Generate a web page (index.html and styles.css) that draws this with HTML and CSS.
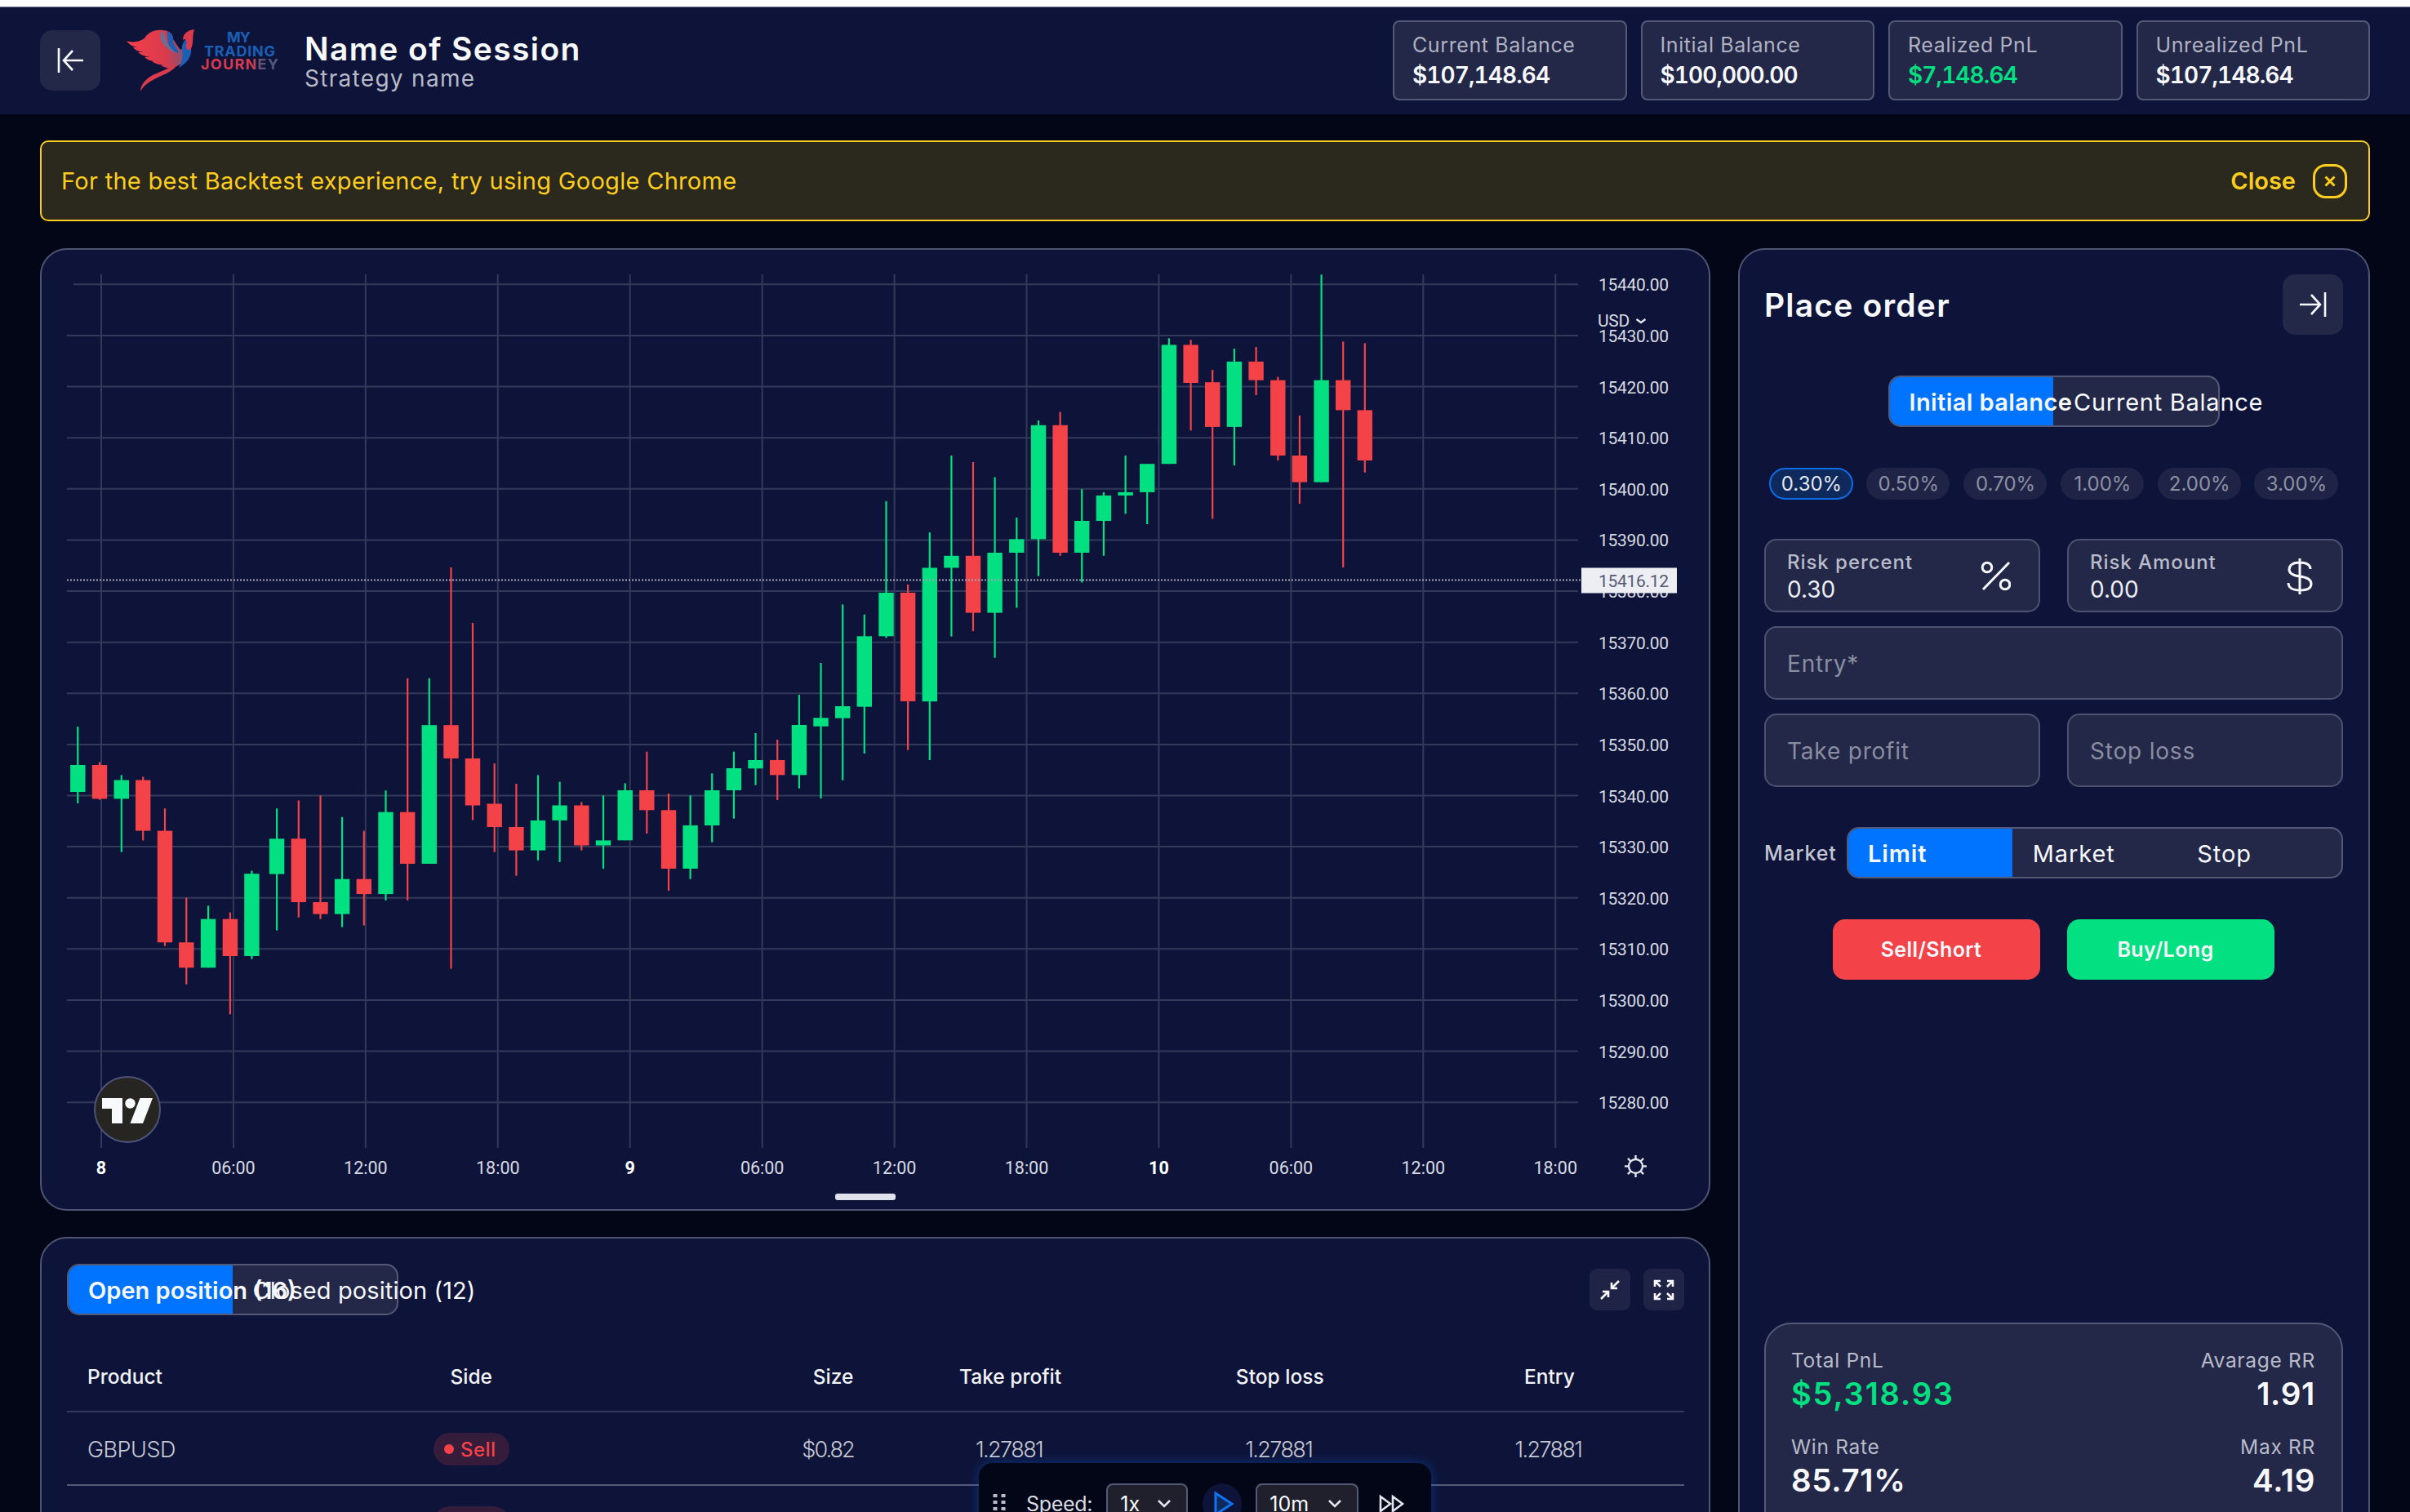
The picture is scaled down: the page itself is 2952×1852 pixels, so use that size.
FILE: index.html
```html
<!DOCTYPE html>
<html lang="en">
<head>
    <meta charset="UTF-8">
    <meta name="viewport" content="width=device-width, initial-scale=1.0">
    <title>My Trading Journey - Backtest</title>
    <link rel="stylesheet" href="styles.css">
</head>
<body>

    <!-- Header -->
    <header class="header">
        <button class="icon-btn">
            <svg width="36" height="36" viewBox="0 0 36 36"><path d="M4 3v30M34 18H11M21 6L10 18l11 12"/></svg>
        </button>
        <svg class="logo" width="188" height="80" viewBox="154 33 188 80">
            <defs>
                <linearGradient id="wing" x1="0" y1="0" x2="1" y2="0">
                    <stop offset="0" stop-color="#f4404a"/>
                    <stop offset="0.6" stop-color="#d93a4c"/>
                    <stop offset="1" stop-color="#5b5f86"/>
                </linearGradient>
                <linearGradient id="name" x1="0" y1="0" x2="1" y2="0">
                    <stop offset="0.65" stop-color="#d93a4c"/>
                    <stop offset="0.8" stop-color="#53577c"/>
                </linearGradient>
            </defs>
            <path fill="url(#wing)" d="M155 49c8 3 16 1 22-3 4-7 12-11 22-10 8 0 13 4 13 11l8 12c5 2 9-4 11-9 2-6 4-10 3-14 4 10 0 25-4 32-4 8-12 12-18 14-5 1-11 0-15-3l4-1c-6 1-11-1-15-4h5c-6 0-11-2-14-5h6c-6-1-11-3-14-6h6c-6-1-10-3-12-6h5c-6-1-10-4-13-8z"/>
            <path fill="#6b6f92" d="M198 36c5 6 4 12 8 18l10 10c-8-3-16-9-19-16-1-4 0-8 1-12z"/>
            <path fill="#1d5fb4" d="M204 37c7 2 9 8 8 13 2 7 6 9 7 14-6-1-10-5-13-12-1-5-1-11-2-15zM228 46c4 4 7 9 6 17-1 9-8 15-15 19 5-8 5-15 4-21-1-6 2-11 5-15z"/>
            <path fill="#d93a4c" d="M238 35c-8 1-14 5-14 13 3-3 6 1 4 6-1 4 2 7 5 6 5-7 2-16 5-25z"/>
            <path fill="#d93a4c" d="M216 79c-3 6-12 10-21 14-10 5-18 9-23 18 0-8 6-15 15-20 11-5 21-8 24-13z"/>
            <text class="logo-text blue" x="278" y="51" textLength="29">MY</text>
            <text class="logo-text blue" x="250" y="68" textLength="87">TRADING</text>
            <text class="logo-text" fill="url(#name)" x="246" y="84" textLength="95">JOURNEY</text>
        </svg>
        <div class="session">
            <h1>Name of Session</h1>
            <p>Strategy name</p>
        </div>
        <div class="balances">
            <div class="balance"><span>Current Balance</span><strong>$107,148.64</strong></div>
            <div class="balance"><span>Initial Balance</span><strong>$100,000.00</strong></div>
            <div class="balance"><span>Realized PnL</span><strong class="green">$7,148.64</strong></div>
            <div class="balance"><span>Unrealized PnL</span><strong>$107,148.64</strong></div>
        </div>
    </header>

    <main class="page">
        <!-- Browser notice -->
        <div class="notice">
            <p>For the best Backtest experience, try using Google Chrome</p>
            <button class="notice-close">
                Close
                <svg width="42" height="42" viewBox="0 0 42 42"><rect x="1.5" y="1.5" width="39" height="39" rx="14"/><path d="M15.500 15.500l11 11M26.500 15.500l-11 11"/></svg>
            </button>
        </div>

        <div class="columns">
            <div class="left">
                <!-- Chart -->
                <section class="panel chart-panel">
                    <svg id="chart" width="2041" height="1175" viewBox="51 306 2041 1175"></svg>
                </section>

                <!-- Positions -->
                <section class="panel positions">
                    <div class="positions-top">
                        <div class="tabs">
                            <div class="tab active">Open position (16)</div>
                            <div class="tab closed">Closed position (12)</div>
                        </div>
                        <div class="tools">
                            <button class="tool-btn">
                                <svg width="26" height="26" viewBox="0 0 26 26"><path d="M24 2l-8 8M15 4v7h7M2 24l8-8M4 15h7v7"/></svg>
                            </button>
                            <button class="tool-btn">
                                <svg width="26" height="26" viewBox="0 0 26 26"><path d="M2 9V2h7M3 3l6 6M17 2h7v7M23 3l-6 6M2 17v7h7M3 23l6-6M24 17v7h-7M23 23l-6-6"/></svg>
                            </button>
                        </div>
                    </div>
                    <div class="table">
                        <div class="row head">
                            <span class="start">Product</span><span>Side</span><span class="end">Size</span>
                            <span>Take profit</span><span>Stop loss</span><span>Entry</span>
                        </div>
                        <div class="row">
                            <span class="start">GBPUSD</span><span><b class="side">Sell</b></span><span class="end size">$0.82</span>
                            <span class="price">1.27881</span><span class="price">1.27881</span><span class="price">1.27881</span>
                        </div>
                        <div class="row">
                            <span class="start">GBPUSD</span><span><b class="side">Sell</b></span><span class="end size">$0.82</span>
                            <span class="price">1.27881</span><span class="price">1.27881</span><span class="price">1.27881</span>
                        </div>
                    </div>
                </section>
            </div>

            <!-- Place order -->
            <aside class="panel order">
                <div class="order-top">
                    <h2>Place order</h2>
                    <button class="icon-btn">
                        <svg width="36" height="36" viewBox="0 0 36 36"><path d="M33 3v30M2 18h23M16 6l11 12-11 12"/></svg>
                    </button>
                </div>
                <div class="tabs balance-tabs">
                    <div class="tab active">Initial balance</div>
                    <div class="tab">Current Balance</div>
                </div>
                <div class="chips">
                    <span class="chip active">0.30%</span>
                    <span class="chip">0.50%</span>
                    <span class="chip">0.70%</span>
                    <span class="chip">1.00%</span>
                    <span class="chip">2.00%</span>
                    <span class="chip">3.00%</span>
                </div>
                <div class="fields">
                    <div class="field">
                        <div><label>Risk percent</label><p>0.30</p></div>
                        <svg width="38" height="46" viewBox="0 0 38 46"><circle cx="9" cy="12" r="5.800"/><circle cx="31" cy="33" r="5.800"/><path d="M36 6L4 39"/></svg>
                    </div>
                    <div class="field">
                        <div><label>Risk Amount</label><p>0.00</p></div>
                        <svg class="dollar" width="32" height="46" viewBox="0 0 32 46"><path d="M16 1v44M29 14c0-5-5-8-13-8S3 9 3 14.500 8 22 16 23s14 3 14 9-6 8-14 8-14-3-14-9"/></svg>
                    </div>
                    <div class="field wide">Entry*</div>
                    <div class="field">Take profit</div>
                    <div class="field">Stop loss</div>
                </div>
                <div class="market">
                    <span>Market</span>
                    <div class="tabs market-tabs">
                        <div class="tab active">Limit</div>
                        <div class="tab">Market</div>
                        <div class="tab">Stop</div>
                    </div>
                </div>
                <div class="actions">
                    <button class="sell">Sell/Short</button>
                    <button class="buy">Buy/Long</button>
                </div>
                <div class="summary">
                    <div><span>Total PnL</span><strong class="green total">$5,318.93</strong></div>
                    <div class="right"><span>Avarage RR</span><strong>1.91</strong></div>
                    <div><span>Win Rate</span><strong>85.71%</strong></div>
                    <div class="right"><span>Max RR</span><strong>4.19</strong></div>
                </div>
            </aside>
        </div>
    </main>

    <!-- Playback bar, floats over the positions table -->
    <div class="player">
        <svg class="grip" width="20" height="30" viewBox="0 0 20 30"><path d="M5 3v24M15 3v24"/></svg>
        <span class="speed">Speed:</span>
        <div class="select small">1x<svg width="18" height="12" viewBox="0 0 18 12"><path d="M2 2l7 7 7-7"/></svg></div>
        <button class="play"><svg width="26" height="32" viewBox="0 0 26 32"><path d="M3 3v26l20-13z"/></svg></button>
        <div class="select">10m<svg width="18" height="12" viewBox="0 0 18 12"><path d="M2 2l7 7 7-7"/></svg></div>
        <svg class="forward" width="32" height="26" viewBox="0 0 32 26"><path d="M2 4v18l12-9zM17 4v18l12-9z"/></svg>
    </div>

    <script src="chart.js"></script>
</body>
</html>
```
FILE: styles.css
```css
/* General Reset */
* {
    box-sizing: border-box;
    margin: 0;
    padding: 0;
    font-family: Inter, "Liberation Sans", sans-serif;
}

body {
    width: 2952px;
    height: 1852px;
    overflow: hidden;
    background: #030617;
    border-top: 8px solid #fff;
    color: #f7f8fb;
    font-size: 28px;
}

button {
    border: none;
    background: none;
    color: inherit;
    font-size: inherit;
}

svg {
    flex-shrink: 0;
    display: block;
    fill: none;
}

.green {
    color: #02e081 !important;
}

/* Header */
.header {
    display: flex;
    align-items: center;
    height: 132px;
    padding: 0 49px 2px;
    background: #0e1439;
    border-top: 1px solid #777b92;
}

.icon-btn {
    display: flex;
    align-items: center;
    justify-content: center;
    width: 74px;
    height: 74px;
    border-radius: 15px;
    background: #232849;
}

.icon-btn svg {
    stroke: #f7f8fb;
    stroke-width: 2.6;
}

.logo {
    margin-left: 31px;
}

.logo-text {
    font-size: 18px;
    font-weight: 700;
}

.blue {
    fill: #1b5fb5;
}

.session {
    margin-left: 31px;
    padding-top: 4px;
}

.session h1 {
    font-size: 39px;
    line-height: 41px;
    font-weight: 600;
    letter-spacing: 1.4px;
}

.session p {
    font-size: 28px;
    line-height: 32px;
    color: #b7b9c7;
    letter-spacing: 1.3px;
}

.balances {
    display: flex;
    gap: 17px;
    margin-left: auto;
}

.balance {
    display: flex;
    flex-direction: column;
    justify-content: center;
    width: 286.500px;
    height: 98px;
    padding: 1px 0 0 22px;
    border: 2px solid #545976;
    border-radius: 8px;
    background: #232849;
}

.balance span {
    font-size: 25px;
    line-height: 36px;
    color: #b0b2c1;
    letter-spacing: 0.6px;
}

.balance strong {
    font-size: 28px;
    line-height: 38px;
    font-weight: 600;
    font-variant-numeric: tabular-nums;
    letter-spacing: -0.9px;
}

/* Page */
.page {
    padding: 32px 49px 0;
}

.notice {
    display: flex;
    align-items: center;
    justify-content: space-between;
    height: 99px;
    padding: 0 26px 0 24px;
    border: 2px solid #facc1f;
    border-radius: 10px;
    background: #2b281d;
    color: #fbcd1f;
    font-size: 29px;
    letter-spacing: 0.3px;
}

.notice-close {
    display: flex;
    align-items: center;
    gap: 21px;
    font-weight: 600;
}

.notice-close svg {
    stroke: #fbcd1f;
    stroke-width: 3;
}

.columns {
    display: flex;
    gap: 34px;
    margin-top: 33px;
}

.left {
    display: flex;
    flex-direction: column;
    gap: 32px;
    width: 2046px;
}

.panel {
    border: 2px solid #4f5472;
    border-radius: 33px;
    background: #0e1439;
}

/* Chart */
.chart-panel {
    height: 1179px;
}

.grid-line {
    stroke: #333959;
    stroke-width: 2;
}

.price-line {
    stroke: #a3a6b7;
    stroke-width: 2;
    stroke-dasharray: 2 2;
}

.up {
    fill: #02e081;
}

.down {
    fill: #f44249;
}

.axis-text {
    fill: #d9dbe3;
    font-family: Roboto, sans-serif;
    font-size: 21.500px;
}

.axis-text.amount {
    font-size: 21px;
    letter-spacing: -0.3px;
}

.axis-text.day {
    font-weight: 700;
    fill: #fff;
}

.axis-text.current {
    fill: #565a76;
}

.price-tag {
    fill: #eceef3;
}

.chart-icon {
    stroke: #e4e6ed;
    stroke-width: 2.4;
}

.tv-circle {
    fill: #262522;
    stroke: #4d5277;
    stroke-width: 2;
}

.tv-mark {
    fill: #f8f9fb;
}

.handle {
    fill: #dfe2ea;
}

/* Tabs */
.tabs {
    display: flex;
    width: 406px;
    height: 63px;
    border: 2px solid #545976;
    border-radius: 15px;
    background: #232849;
}

.tab {
    flex: 1 1 0;
    width: 0;
    padding-left: 25px;
    line-height: 61px;
    font-size: 29px;
    white-space: nowrap;
}

.tab.active {
    position: relative;
    padding-left: 24px;
    font-weight: 600;
    background: #0074ff;
    border-radius: 13px 0 0 13px;
}

.closed {
    letter-spacing: 0.1px;
}

/* Positions */
.positions {
    height: 500px;
    padding: 31px 30px 0 31px;
}

.positions-top {
    display: flex;
    align-items: center;
    justify-content: space-between;
}

.tools {
    display: flex;
    gap: 16px;
}

.tool-btn {
    display: flex;
    align-items: center;
    justify-content: center;
    width: 50px;
    height: 51px;
    border-radius: 9px;
    background: #1f2446;
}

.tool-btn svg {
    stroke: #f7f8fb;
    stroke-width: 2.6;
}

.table {
    margin-top: 28px;
}

.row {
    display: grid;
    grid-template-columns: repeat(6, 1fr);
    align-items: center;
    height: 90px;
    padding-top: 2px;
    border-bottom: 2px solid #545976;
    text-align: center;
    font-size: 27px;
    font-weight: 300;
    color: #c6c8d3;
}

.row.head {
    height: 91px;
    padding-top: 5px;
    border-color: #353a5c;
    font-size: 24.500px;
    font-weight: 500;
    color: #f2f3f7;
}

.row .start {
    padding-left: 25px;
    text-align: left;
    letter-spacing: -0.5px;
}

.row.head .start {
    letter-spacing: 0;
}

.row .end {
    padding-right: 27px;
    text-align: right;
}

.row .size {
    padding-right: 27px;
    letter-spacing: -2px;
}

.price {
    padding-right: 3px;
    letter-spacing: -1.6px;
}

.side {
    display: inline-flex;
    align-items: center;
    justify-content: center;
    gap: 8px;
    width: 93px;
    height: 40px;
    padding-right: 3px;
    border-radius: 20px;
    background: #361c3b;
    color: #f44249;
    font-size: 24px;
    font-weight: 500;
    letter-spacing: 0.5px;
}

.side::before {
    content: "";
    width: 12px;
    height: 12px;
    border-radius: 50%;
    background: #f44249;
}

/* Place order */
.order {
    width: 774px;
    height: 1700px;
    padding: 30px 31px 0 30px;
}

.order-top {
    display: flex;
    align-items: center;
    justify-content: space-between;
}

.order h2 {
    font-size: 39px;
    font-weight: 600;
    letter-spacing: 1.2px;
}

.balance-tabs {
    margin: 50px auto 0;
    letter-spacing: 0.75px;
}

.balance-tabs .active {
    letter-spacing: 0.4px;
}

.chips {
    display: flex;
    justify-content: center;
    gap: 16.500px;
    margin-top: 50px;
}

.chip {
    width: 102.300px;
    height: 39px;
    padding-left: 1px;
    border-radius: 20px;
    background: #1f2446;
    color: #8d90a3;
    font-size: 24px;
    line-height: 39px;
    text-align: center;
}

.chip.active {
    border: 2px solid #0c6ce6;
    background: #0e2a5c;
    color: #e4e6ee;
    line-height: 35px;
}

.fields {
    display: grid;
    grid-template-columns: 338px 338px;
    gap: 17px 33px;
    margin-top: 48px;
}

.field {
    display: flex;
    align-items: center;
    justify-content: space-between;
    height: 90px;
    padding: 2px 34px 0 26px;
    border: 2px solid #4d5270;
    border-radius: 15px;
    background: #232849;
    color: #8a8da0;
    font-size: 28px;
    letter-spacing: 0.8px;
}

.field.wide {
    grid-column: span 2;
}

.field label {
    display: block;
    font-size: 24px;
    line-height: 32px;
    font-weight: 500;
    color: #b9bbc9;
    letter-spacing: 0.95px;
}

.field p {
    line-height: 34px;
    color: #eceef3;
    letter-spacing: 0;
}

.field svg {
    stroke: #f7f8fb;
    stroke-width: 3;
}

.field .dollar {
    margin-right: 1px;
}

.market {
    display: flex;
    align-items: center;
    justify-content: space-between;
    margin-top: 49px;
}

.market > span {
    font-size: 25px;
    font-weight: 500;
    color: #c3c5d1;
    letter-spacing: 0.8px;
}

.market-tabs {
    width: 608px;
    letter-spacing: 0.9px;
}

.actions {
    display: flex;
    justify-content: center;
    gap: 33px;
    margin-top: 50px;
}

.actions button {
    width: 254px;
    height: 74px;
    padding-right: 13px;
    border-radius: 15px;
    font-size: 25px;
    font-weight: 600;
    letter-spacing: 0.4px;
}

.sell {
    background: #f44249;
}

.buy {
    background: #02e081;
}

.summary {
    display: grid;
    grid-template-columns: 1fr 1fr;
    align-content: start;
    row-gap: 24px;
    height: 380px;
    margin-top: 420px;
    padding: 26px 32px 0 31px;
    border: 2px solid #545976;
    border-radius: 33px;
    background: #232849;
}

.summary div {
    display: flex;
    flex-direction: column;
}

.summary .right {
    align-items: flex-end;
}

.summary span {
    font-size: 24.500px;
    line-height: 36px;
    color: #b9bbc9;
    letter-spacing: 0.7px;
}

.summary strong {
    font-size: 38.500px;
    line-height: 46px;
    font-weight: 600;
    letter-spacing: 0.7px;
}

.summary .total {
    font-size: 38px;
    letter-spacing: 1.9px;
}

/* Playback bar */
.player {
    position: absolute;
    left: 1199px;
    top: 1792px;
    display: flex;
    align-items: center;
    width: 554px;
    height: 100px;
    padding: 0 15px;
    border-radius: 17px;
    background: #030617;
    box-shadow: 0 0 14px rgba(0, 116, 255, 0.35);
    font-size: 26px;
}

.grip path {
    stroke: #b9bbc9;
    stroke-width: 5;
    stroke-dasharray: 4 4;
}

.speed {
    margin-left: 23px;
    color: #d9dbe3;
    font-size: 25px;
    letter-spacing: -0.3px;
}

.select {
    display: flex;
    align-items: center;
    justify-content: space-between;
    width: 126px;
    height: 51px;
    padding: 0 18px 0 15px;
    border: 2px solid #545976;
    border-radius: 8px;
    background: #1f202c;
    font-size: 25px;
}

.select.small {
    width: 100px;
    margin-left: 17px;
}

.select svg,
.forward {
    stroke: #e4e6ed;
    stroke-width: 2.6;
}

.play {
    display: flex;
    align-items: center;
    justify-content: center;
    width: 48px;
    height: 51px;
    margin: 0 17px 0 18px;
    border-radius: 50%;
    background: #0e1439;
}

.play svg {
    margin-left: 4px;
    stroke: #0f74f0;
    stroke-width: 3;
    fill: #0e2a5c;
}

.forward {
    margin-left: 25px;
}
```
FILE: chart.js
```js
// Candles: [x, high, body top, body bottom, low, up]
const candles = [
    [95.3, 890, 937, 970, 984, 1], [122, 933.5, 937, 978.4, 979.6, 0], [148.8, 949.4, 955.5, 978.4, 1043.7, 1],
    [175.2, 951.4, 955.5, 1017.6, 1029.4, 0], [202, 990.2, 1017.6, 1154.3, 1158.8, 0], [228.3, 1099.6, 1154.3, 1185.3, 1205.7, 0],
    [255.1, 1109.4, 1125.7, 1185.3, 1185.3, 1], [281.9, 1117.6, 1125.7, 1171, 1242.4, 0], [308.4, 1066.5, 1070.2, 1171, 1174.7, 1],
    [339.1, 990.2, 1027.3, 1070.6, 1139.6, 1], [365.8, 980.4, 1027.3, 1105, 1123.7, 0], [392.5, 974.3, 1105, 1119.6, 1125.7, 0],
    [419.1, 1000.8, 1076.7, 1119.6, 1135.5, 1], [445.8, 1017.6, 1076.7, 1095.1, 1133.5, 0], [472.5, 968.2, 994.7, 1095.1, 1102.9, 1],
    [499.2, 830.8, 994.7, 1058, 1102.9, 0], [525.8, 830.8, 888.2, 1058, 1058, 1], [552.5, 695, 888.2, 929, 1186.5, 0],
    [579, 763, 929, 986.5, 1004.5, 0], [605.7, 935.1, 984.5, 1013, 1043.7, 0], [632.4, 960, 1013, 1041.6, 1072.7, 0],
    [659, 949.4, 1004.9, 1041.6, 1053.9, 1], [685.6, 957.6, 986.5, 1004.9, 1055.9, 1], [712.3, 982.4, 986.5, 1035.5, 1041.6, 0],
    [739, 974.3, 1029.4, 1035.5, 1064.1, 1], [765.7, 959.3, 968, 1029.3, 1029.3, 1], [792.3, 920.7, 968, 992.3, 1021, 0],
    [819, 972, 992.3, 1064, 1091, 0], [845.6, 974.3, 1011, 1064, 1076.7, 1], [872.2, 947.3, 968, 1011, 1031.7, 1],
    [898.9, 920.7, 941, 968, 1002.7, 1], [925.5, 898, 931, 941.3, 961.7, 1], [952.2, 906, 931, 949.3, 980, 0],
    [978.9, 851, 888, 949.3, 965.7, 1], [1005.5, 812, 879.3, 889.7, 978, 1], [1032.2, 740.3, 865, 879.7, 955.7, 1],
    [1058.8, 752.7, 779.3, 865.7, 923, 1], [1085.5, 613.8, 726, 779.3, 781.3, 1], [1112.1, 716, 726, 859, 918.7, 0],
    [1138.8, 652.2, 695.5, 859.2, 931, 1], [1165.4, 558, 680.8, 695.5, 779.6, 1], [1192, 566, 680.8, 750.6, 773, 0],
    [1218.6, 584.5, 677, 750.6, 805.7, 1], [1245.3, 633.9, 660.4, 677, 744.5, 1], [1272, 515, 520.8, 660.4, 705.7, 1],
    [1298.6, 504.5, 520.8, 677, 680.8, 0], [1325.2, 599.2, 638, 677, 713.5, 1], [1351.9, 602.9, 606.9, 638, 680.8, 1],
    [1378.6, 558, 602.9, 606.9, 629.4, 1], [1405.2, 568.2, 568.2, 602.9, 642, 1], [1431.9, 414.3, 422.4, 568.2, 568.2, 1],
    [1458.6, 416.3, 422.4, 469, 527.3, 0], [1485.2, 453, 468.2, 522.9, 635.5, 0], [1511.9, 427, 442.9, 522.9, 570.2, 1],
    [1538.6, 424.9, 442.9, 465.7, 484, 0], [1565.3, 461.6, 465.7, 558, 564, 0], [1591.9, 509, 558, 590.6, 617, 0],
    [1618.6, 336.3, 465.7, 590.6, 590.6, 1], [1645.2, 418.4, 465.7, 502.4, 695, 0], [1671.8, 420.4, 502.4, 564, 578.8, 0]
];

const times = ["8", "06:00", "12:00", "18:00", "9", "06:00", "12:00", "18:00", "10", "06:00", "12:00", "18:00"];

let out = "";

// Vertical grid and time labels
times.forEach((t, i) => {
    const x = 124 + i * 161.93;
    const day = t.includes(":") ? "" : " day";
    out += `<line class="grid-line" x1="${x}" y1="336" x2="${x}" y2="1406"/>`;
    out += `<text class="axis-text${day}" x="${x}" y="1438" text-anchor="middle">${t}</text>`;
});

// Horizontal grid and price labels
for (let i = 0; i < 17; i++) {
    const y = 348.3 + i * 62.62;
    out += `<line class="grid-line" x1="${i ? 82 : 90}" y1="${y}" x2="1933" y2="${y}"/>`;
    out += `<text class="axis-text amount" x="1958" y="${y + 8}">${15440 - i * 10}.00</text>`;
}

// Candles
candles.forEach(([x, high, top, bottom, low, up]) => {
    const cls = up ? "up" : "down";
    out += `<rect class="${cls}" x="${x - 1.1}" y="${high}" width="2.2" height="${low - high}"/>`;
    out += `<rect class="${cls}" x="${x - 9.2}" y="${top}" width="18.4" height="${bottom - top}"/>`;
});

// Current price
out += `<line class="price-line" x1="82" y1="710.5" x2="1937" y2="710.5"/>`;
out += `<rect class="price-tag" x="1937" y="695.5" width="117" height="31"/>`;
out += `<text class="axis-text amount current" x="1958" y="719">15416.12</text>`;

// Currency picker
out += `<text class="axis-text amount" x="1957" y="400">USD</text>`;
out += `<path class="chart-icon" d="M2004.500 391l5.500 4 5.500-4"/>`;

// Settings icon
out += `<circle class="chart-icon" cx="2003.500" cy="1428.500" r="8.500"/>`;
for (let a = 0; a < 360; a += 45) {
    out += `<path class="chart-icon" d="M2003.500 1420v-5" transform="rotate(${a} 2003.5 1428.5)"/>`;
}

// TradingView badge and resize handle
out += `<circle class="tv-circle" cx="156" cy="1359" r="40"/>`;
out += `<path class="tv-mark" d="M125 1345h25v31h-13v-18h-12zM171.500 1345h15.500l-12 31h-15.500z"/><circle class="tv-mark" cx="159.500" cy="1351.500" r="6.200"/>`;
out += `<rect class="handle" x="1023" y="1462" width="74" height="8" rx="3"/>`;

document.getElementById("chart").innerHTML = out;
```
